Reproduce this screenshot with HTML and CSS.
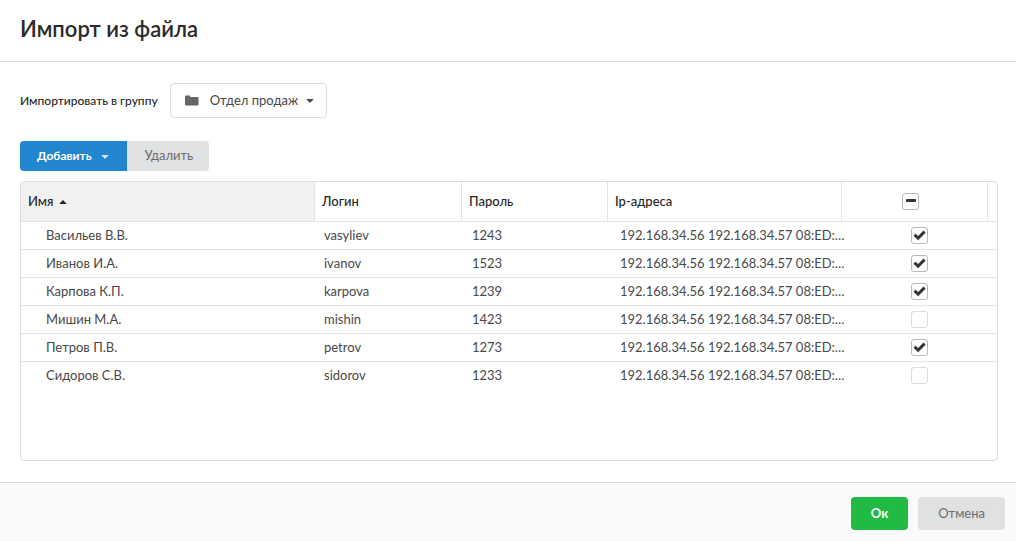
FILE: index.html
```html
<!DOCTYPE html>
<html lang="ru">
<head>
<meta charset="utf-8">
<title>Импорт из файла</title>
<link rel="stylesheet" href="styles.css">
</head>
<body>
<form class="dialog">
  <header class="dialog-header">
    <h1 class="title">Импорт из файла</h1>
  </header>
  <main class="dialog-body">
    <div class="field">
      <label class="field-label" for="group">Импортировать в группу</label>
      <div class="dropdown">
        <select class="dropdown-select" id="group">
          <option>Отдел продаж</option>
        </select>
        <svg class="folder-icon" viewBox="0 0 14 11" aria-hidden="true"><path d="M0 1.5Q0 .5 1 .5H4.3Q5.3 .5 5.3 1.5V2H12.2Q13.5 2 13.5 3V9.3Q13.5 10.500 12.500 10.500H1Q0 10.500 0 9.500Z"/></svg>
        <svg class="caret" viewBox="0 0 8 4" aria-hidden="true"><path d="M.2 0H7.800L4 4Z"/></svg>
      </div>
    </div>
    <div class="toolbar">
      <button class="button button-add" type="button">Добавить
        <svg class="caret" viewBox="0 0 8 4" aria-hidden="true"><path d="M.2 0H7.800L4 4Z"/></svg>
      </button>
      <button class="button button-delete" type="button">Удалить</button>
    </div>
    <div class="table-frame">
      <table class="table">
        <colgroup>
          <col class="col-name"><col class="col-login"><col class="col-password"><col class="col-ip"><col class="col-check"><col class="col-end">
        </colgroup>
        <thead>
          <tr>
            <th class="sorted" aria-sort="ascending">Имя <svg class="caret sort-caret" viewBox="0 0 8 4" aria-hidden="true"><path d="M.2 4H7.800L4 0Z"/></svg></th>
            <th>Логин</th>
            <th>Пароль</th>
            <th>Ip-адреса</th>
            <th class="check-head"><label class="check check-mixed"><input class="check-input" type="checkbox" aria-label="Выбрать все"><svg class="check-mark" viewBox="0 0 15 15" aria-hidden="true"><rect x="3" y="5" width="10" height="3" rx=".8"/></svg></label></th>
            <th></th>
          </tr>
        </thead>
        <tbody>
          <tr><td>Васильев В.В.</td><td>vasyliev</td><td>1243</td><td>192.168.34.56 192.168.34.57 08:ED:…</td><td class="check-cell"><label class="check"><input class="check-input" type="checkbox" aria-label="Васильев В.В." checked><svg class="check-mark" viewBox="0 0 15 15" aria-hidden="true"><path d="M1.500 7.700 3.500 5.700 6.100 8.100 11.500 2.600 13.600 4.700 6.100 12.200Z"/></svg></label></td><td></td></tr>
          <tr><td>Иванов И.А.</td><td>ivanov</td><td>1523</td><td>192.168.34.56 192.168.34.57 08:ED:…</td><td class="check-cell"><label class="check"><input class="check-input" type="checkbox" aria-label="Иванов И.А." checked><svg class="check-mark" viewBox="0 0 15 15" aria-hidden="true"><path d="M1.500 7.700 3.500 5.700 6.100 8.100 11.500 2.600 13.600 4.700 6.100 12.200Z"/></svg></label></td><td></td></tr>
          <tr><td>Карпова К.П.</td><td>karpova</td><td>1239</td><td>192.168.34.56 192.168.34.57 08:ED:…</td><td class="check-cell"><label class="check"><input class="check-input" type="checkbox" aria-label="Карпова К.П." checked><svg class="check-mark" viewBox="0 0 15 15" aria-hidden="true"><path d="M1.500 7.700 3.500 5.700 6.100 8.100 11.500 2.600 13.600 4.700 6.100 12.200Z"/></svg></label></td><td></td></tr>
          <tr><td>Мишин М.А.</td><td>mishin</td><td>1423</td><td>192.168.34.56 192.168.34.57 08:ED:…</td><td class="check-cell"><label class="check"><input class="check-input" type="checkbox" aria-label="Мишин М.А."><svg class="check-mark" viewBox="0 0 15 15" aria-hidden="true"><path d="M1.500 7.700 3.500 5.700 6.100 8.100 11.500 2.600 13.600 4.700 6.100 12.200Z"/></svg></label></td><td></td></tr>
          <tr><td>Петров П.В.</td><td>petrov</td><td>1273</td><td>192.168.34.56 192.168.34.57 08:ED:…</td><td class="check-cell"><label class="check"><input class="check-input" type="checkbox" aria-label="Петров П.В." checked><svg class="check-mark" viewBox="0 0 15 15" aria-hidden="true"><path d="M1.500 7.700 3.500 5.700 6.100 8.100 11.500 2.600 13.600 4.700 6.100 12.200Z"/></svg></label></td><td></td></tr>
          <tr><td>Сидоров С.В.</td><td>sidorov</td><td>1233</td><td>192.168.34.56 192.168.34.57 08:ED:…</td><td class="check-cell"><label class="check"><input class="check-input" type="checkbox" aria-label="Сидоров С.В."><svg class="check-mark" viewBox="0 0 15 15" aria-hidden="true"><path d="M1.500 7.700 3.500 5.700 6.100 8.100 11.500 2.600 13.600 4.700 6.100 12.200Z"/></svg></label></td><td></td></tr>
        </tbody>
      </table>
    </div>
  </main>
  <footer class="dialog-footer">
    <button class="button button-ok" type="submit">Ок</button>
    <button class="button button-cancel" type="button">Отмена</button>
  </footer>
</form>
</body>
</html>
```
FILE: styles.css
```css
*, *::before, *::after { box-sizing: border-box; }

body {
  margin: 0;
  background: #fff;
  color: #484848;
  font: 13px/18px Lato, "Liberation Sans", sans-serif;
}

.dialog {
  display: flex;
  flex-direction: column;
  min-height: 100vh;
}

.dialog-header {
  padding: 14px 20px 17px;
  border-bottom: 1px solid #dcdddd;
}

.title {
  margin: 0;
  color: #2b2b2b;
  font-size: 22px;
  font-weight: 600;
  line-height: 30px;
}

.dialog-body {
  flex: 1;
  display: flex;
  flex-direction: column;
  padding: 21px 18px 21px 20px;
}

.field {
  display: flex;
  align-items: center;
  gap: 12px;
}

.field-label {
  color: #262626;
  font-size: 12px;
  font-weight: 500;
}

.dropdown {
  display: grid;
  grid-template-columns: 157px;
  align-items: center;
}

.dropdown > * { grid-area: 1 / 1; }

.dropdown-select {
  appearance: none;
  height: 35px;
  padding: 0 28px 2px 39px;
  border: 1px solid #dededf;
  border-radius: 4px;
  background: #fff;
  color: #484848;
  font: inherit;
}

.folder-icon {
  width: 14px;
  height: 11px;
  margin-left: 15px;
  fill: #666;
  pointer-events: none;
}

.caret {
  width: 8px;
  height: 4px;
  fill: currentColor;
}

.dropdown .caret {
  justify-self: end;
  margin-right: 13px;
  pointer-events: none;
}

.toolbar {
  display: flex;
  margin: 23px 0 10px;
}

.button {
  display: flex;
  align-items: center;
  justify-content: center;
  border: 0;
  border-radius: 4px;
  font: inherit;
}

.button-add {
  gap: 10px;
  height: 30px;
  padding: 0 18px 0 17px;
  border-radius: 4px 0 0 4px;
  background: #2185d0;
  color: #fff;
  font-size: 12px;
  font-weight: 700;
}

.button-add .caret { margin-top: 2px; opacity: .8; }

.button-delete {
  height: 30px;
  padding: 0 16px 2px 17px;
  border-radius: 0 4px 4px 0;
  background: #e0e1e2;
  color: #6c6c6d;
}

.table-frame {
  flex: 1;
  overflow: hidden;
  border: 1px solid #dededf;
  border-radius: 4px;
}

.table {
  width: 100%;
  table-layout: fixed;
  border-collapse: separate;
  border-spacing: 0;
}

.col-login { width: 147px; }
.col-password, .col-check { width: 146px; }
.col-ip { width: 234px; }
.col-end { width: 9px; }

.table th {
  height: 40px;
  padding: 0 7px 2px;
  border-right: 1px solid #e4e4e5;
  border-bottom: 1px solid #e4e4e5;
  color: #262626;
  font-weight: 500;
  text-align: left;
}

.table th:last-child { padding: 0; border-right: 0; }

.table .sorted { background: #f1f1f1; }

.sort-caret {
  margin-left: 2px;
  vertical-align: 2px;
}

.table td {
  height: 28px;
  padding: 0 0 2px 9px;
  border-bottom: 1px solid #e4e4e5;
  white-space: nowrap;
}

.table td:first-child { padding-left: 25px; }
.table td:nth-child(3) { padding-left: 10px; }
.table td:nth-child(4) { padding-left: 12px; }
.table td:last-child { padding: 0; }
.table tr:last-child td { border-bottom-color: transparent; }

.table .check-head { padding: 0 9px 0 0; }
.table .check-cell { padding: 0 0 0 9px; }

.check {
  display: grid;
  width: 17px;
  margin: 0 auto;
  place-items: center;
}

.check > * { grid-area: 1 / 1; }

.check-input {
  appearance: none;
  width: 17px;
  height: 17px;
  margin: 0;
  border: 1px solid #dadbdc;
  border-radius: 3px;
  background: #fff;
}

.check-mixed .check-input,
.check-input:checked { border-color: #b8b8b9; }

.check-mark {
  width: 15px;
  height: 15px;
  fill: #333;
  pointer-events: none;
  visibility: hidden;
}

.check-mixed .check-mark,
.check-input:checked + .check-mark { visibility: visible; }

.dialog-footer {
  display: flex;
  justify-content: flex-end;
  gap: 10px;
  padding: 14px 11px 11px;
  border-top: 1px solid #d9dadb;
  background: #f9fafb;
}

.button-ok,
.button-cancel {
  height: 33px;
  padding: 0 20px 2px;
}

.button-ok {
  background: #21ba45;
  color: #fff;
  font-weight: 700;
}

.button-cancel {
  background: #e0e1e2;
  color: #6c6c6d;
}
```
